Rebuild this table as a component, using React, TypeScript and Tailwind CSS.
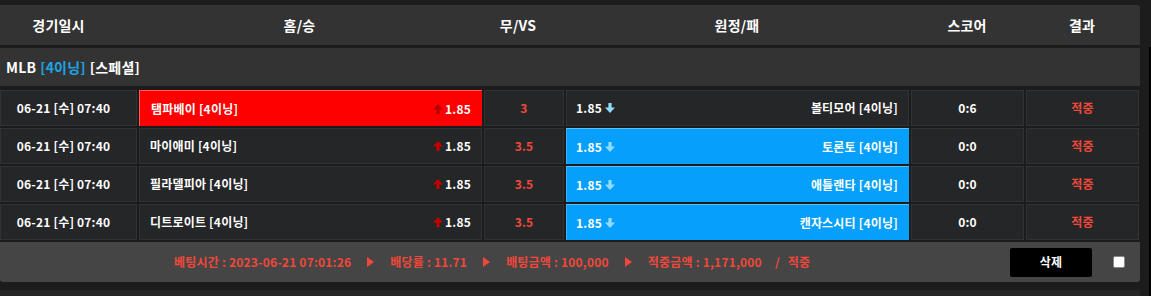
import React from "react";

const FONT = { fontFamily: '"Noto Sans CJK KR", "Noto Sans", sans-serif' };

const rows = [
  { home: "탬파베이 [4이닝]", away: "볼티모어 [4이닝]", vs: "3", score: "0:6", pick: "home" },
  { home: "마이애미 [4이닝]", away: "토론토 [4이닝]", vs: "3.5", score: "0:0", pick: "away" },
  { home: "필라델피아 [4이닝]", away: "애틀랜타 [4이닝]", vs: "3.5", score: "0:0", pick: "away" },
  { home: "디트로이트 [4이닝]", away: "캔자스시티 [4이닝]", vs: "3.5", score: "0:0", pick: "away" },
];

function UpArrow({ color }: { color: string }) {
  return (
    <svg width="10" height="10" viewBox="0 0 10 10" className="shrink-0">
      <path d="M5 0 L10 5.5 H6.6 V10 H3.4 V5.5 H0 Z" fill={color} />
    </svg>
  );
}

function DownArrow() {
  return (
    <svg width="10" height="10" viewBox="0 0 10 10" className="shrink-0">
      <path d="M5 10 L10 4.5 H6.6 V0 H3.4 V4.5 H0 Z" fill="#8fdcff" />
    </svg>
  );
}

function Tri() {
  return (
    <span className="inline-block w-0 h-0 border-l-[7px] border-l-[#f2473a] border-y-[5px] border-y-transparent mx-[16px]" />
  );
}

const cell = "h-[36px] bg-[#252628] border border-[#313233] flex items-center";

export default function App() {
  return (
    <div
      className="w-[1151px] h-[296px] bg-[#1c1c1c] overflow-hidden flex items-start text-[12px] font-bold text-white tracking-[0.2px]"
      style={FONT}
    >
      <div className="w-[1140px] shrink-0 pt-[5px] flex flex-col">
        {/* header */}
        <div className="shrink-0 h-[40px] bg-[#333333] rounded-tr-[3px] flex items-center text-[14px]">
          <div className="w-[117px] text-center">경기일시</div>
          <div className="w-[365px] text-center">홈/승</div>
          <div className="w-[72px] text-center">무/VS</div>
          <div className="w-[366px] text-center">원정/패</div>
          <div className="w-[94px] text-center">스코어</div>
          <div className="w-[126px] pl-[10px] text-center">결과</div>
        </div>
        {/* league */}
        <div className="shrink-0 h-[38px] mt-[3px] bg-[#333333] flex items-center pl-[6px] text-[14px]">
          <span>MLB</span>
          <span className="ml-[4px] text-[#1ea5e6]">[4이닝]</span>
          <span className="ml-[4px]">[스페셜]</span>
        </div>
        {/* rows */}
        <div className="shrink-0 mt-[4px] flex flex-col gap-[2px]">
          {rows.map((r, i) => (
            <div key={i} className="flex gap-[2px]">
              <div className={`${cell} w-[137px] justify-center pr-[10px]`}>06-21 [수] 07:40</div>
              <div
                className={
                  r.pick === "home"
                    ? "h-[36px] w-[343px] bg-[#ff0000] border-t border-l border-t-[#ff5a5a] border-l-[#ff5a5a] flex items-center justify-between pl-[11px] pr-[11px]"
                    : `${cell} w-[343px] justify-between pl-[10px] pr-[10px]`
                }
              >
                <span>{r.home}</span>
                <span className="flex items-center gap-[2px]">
                  <UpArrow color={r.pick === "home" ? "#b80000" : "#c20000"} />
                  <span>1.85</span>
                </span>
              </div>
              <div className={`${cell} w-[80px] justify-center text-[#f0493b]`}>{r.vs}</div>
              <div
                className={
                  r.pick === "away"
                    ? "h-[36px] w-[343px] bg-[#069ffb] border-t border-l border-t-[#5cc0ff] border-l-[#3db2ff] flex items-center justify-between pl-[9px] pr-[11px]"
                    : `${cell} w-[343px] justify-between pl-[9px] pr-[10px]`
                }
              >
                <span className="flex items-center gap-[3px]">
                  <span>1.85</span>
                  <DownArrow />
                </span>
                <span>{r.away}</span>
              </div>
              <div className={`${cell} w-[113px] justify-center`}>{r.score}</div>
              <div className={`${cell} w-[113px] justify-center text-[#f0493b]`}>적중</div>
            </div>
          ))}
        </div>
        {/* footer */}
        <div className="shrink-0 h-[40px] mt-[2px] bg-[#454545] rounded-b-[3px] flex items-center text-[#f2473a]">
          <div className="pl-[174px] flex items-center">
            <span>베팅시간 : 2023-06-21 07:01:26</span>
            <Tri />
            <span>배당률 : 11.71</span>
            <Tri />
            <span>배팅금액 : 100,000</span>
            <Tri />
            <span>적중금액 : 1,171,000</span>
            <span className="ml-[13px]">/</span>
            <span className="ml-[8px]">적중</span>
          </div>
          <div className="ml-auto w-[82px] h-[29px] bg-black rounded-[2px] flex items-center justify-center text-white">
            삭제
          </div>
          <div className="ml-[21px] mr-[15px] w-[12px] h-[12px] bg-white border border-[#8a8a8a] rounded-[2px]" />
        </div>
        <div className="shrink-0 mt-[8px] h-[20px] bg-[#262626]" />
      </div>
      <div className="flex-1 self-stretch flex justify-end">
        <div className="mt-[47px] w-[2px] bg-black" />
      </div>
    </div>
  );
}
